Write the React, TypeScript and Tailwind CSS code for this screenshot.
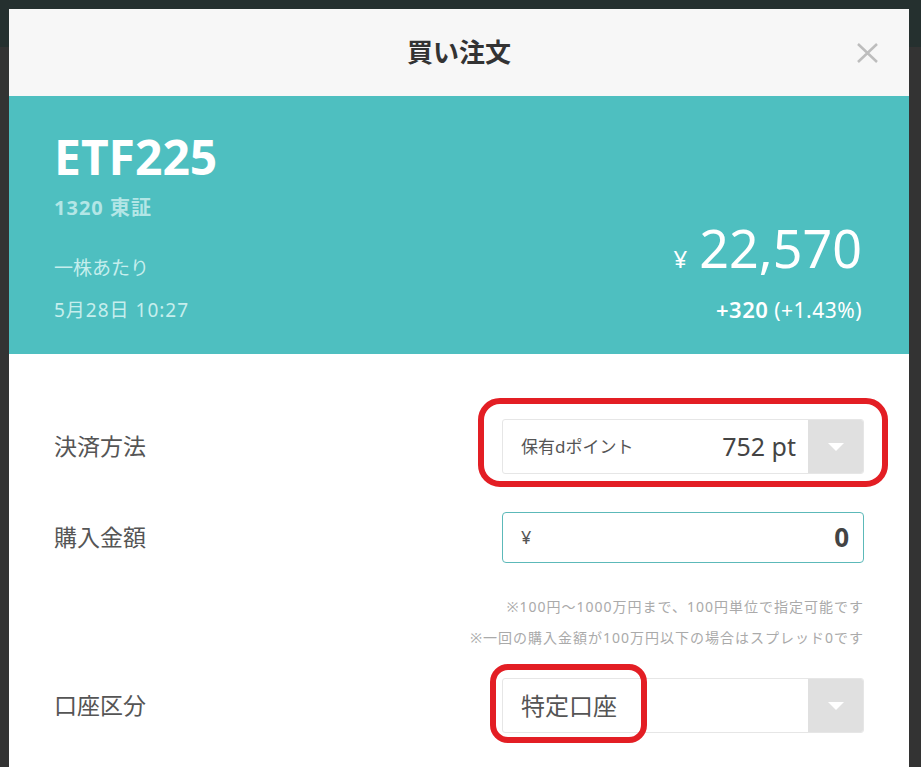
import React from 'react';

const Caret = () => (
  <svg width="16" height="8" viewBox="0 0 16 8">
    <path d="M0 0 L16 0 L8 8 Z" fill="#ffffff" />
  </svg>
);

export default function App() {
  return (
    <div className="relative w-full h-[767px] overflow-hidden bg-[#333333] font-['Noto_Sans','Noto_Sans_CJK_JP',sans-serif]">
      <div className="h-[47px] bg-[#25302f]" />

      {/* modal */}
      <div className="absolute left-[9px] top-[9px] w-[900px] bg-white">
        <div className="relative h-[87px] bg-[#f7f7f7] flex items-center justify-center">
          <h1 className="text-[26px] font-bold text-[#333]">買い注文</h1>
          <svg className="absolute right-[31px] top-[34px]" width="21" height="20" viewBox="0 0 21 20">
            <path d="M1 1 L20 19 M20 1 L1 19" stroke="#bdbdbd" strokeWidth="2.5" />
          </svg>
        </div>

        <div className="bg-[#4ebfc0] h-[258px] pl-[45px] pr-[47px] pt-[37px] text-white">
          <div className="text-[48px] font-bold leading-[48px]">ETF225</div>
          <div className="mt-[15px] text-[20px] font-bold leading-[24px] tracking-[1px] text-[#b3e6e6]">1320 東証</div>
          <div className="flex items-end justify-between">
            <div className="text-[19px] leading-[24px] text-[#c6eeed]">
              <div className="mt-[36px]">一株あたり</div>
              <div className="mt-[18px] tracking-[1px]">5月28日 10:27</div>
            </div>
            <div className="flex flex-col items-end">
              <div className="flex items-baseline leading-[52px]">
                <span className="text-[24px] mr-[12px]">¥</span>
                <span className="text-[52px]">22,570</span>
              </div>
              <div className="mt-[12px] text-[21px] leading-[24px] tracking-[0.5px]">
                <span className="text-[22px] font-semibold">+320</span> (+1.43%)
              </div>
            </div>
          </div>
        </div>

        <div className="px-[45px] pt-[65px] pb-[40px] text-[#555]">
          <div className="flex items-center justify-between">
            <span className="text-[23px]">決済方法</span>
            <div className="w-[362px] h-[55px] flex border border-[#e6e6e6] rounded-[3px] overflow-hidden">
              <div className="flex-1 flex items-center justify-between pl-[18px] pr-[12px]">
                <span className="text-[17px]">保有dポイント</span>
                <span className="text-[25px] text-[#444]">752 pt</span>
              </div>
              <div className="w-[55px] bg-[#e0e0e0] flex items-center justify-center">
                <Caret />
              </div>
            </div>
          </div>

          <div className="mt-[38px] flex items-center justify-between">
            <span className="text-[23px]">購入金額</span>
            <div className="w-[362px] h-[51px] flex items-center justify-between border-[1.5px] border-[#5cb9b9] rounded-[4px] pl-[18px] pr-[14px]">
              <span className="text-[18px]">¥</span>
              <span className="text-[26px] font-bold text-[#444]">0</span>
            </div>
          </div>

          <div className="mt-[32px] flex flex-col items-end text-[14px] tracking-[1px] leading-[24px] text-[#aaaaaa]">
            <p>※100円～1000万円まで、100円単位で指定可能です</p>
            <p className="mt-[7px]">※一回の購入金額が100万円以下の場合はスプレッド0です</p>
          </div>

          <div className="mt-[28px] flex items-center justify-between">
            <span className="text-[23px]">口座区分</span>
            <div className="w-[362px] h-[55px] flex border border-[#e6e6e6] rounded-[3px] overflow-hidden">
              <div className="flex-1 flex items-center pl-[18px]">
                <span className="text-[24px]">特定口座</span>
              </div>
              <div className="w-[55px] bg-[#e0e0e0] flex items-center justify-center">
                <Caret />
              </div>
            </div>
          </div>
        </div>
      </div>

      {/* red annotation marks */}
      <div className="absolute left-[478px] top-[398px] w-[410px] h-[89px] border-[6px] border-[#e31e24] rounded-[22px]" />
      <div className="absolute left-[490px] top-[664px] w-[157px] h-[79px] border-[6px] border-[#e31e24] rounded-[18px]" />
    </div>
  );
}
